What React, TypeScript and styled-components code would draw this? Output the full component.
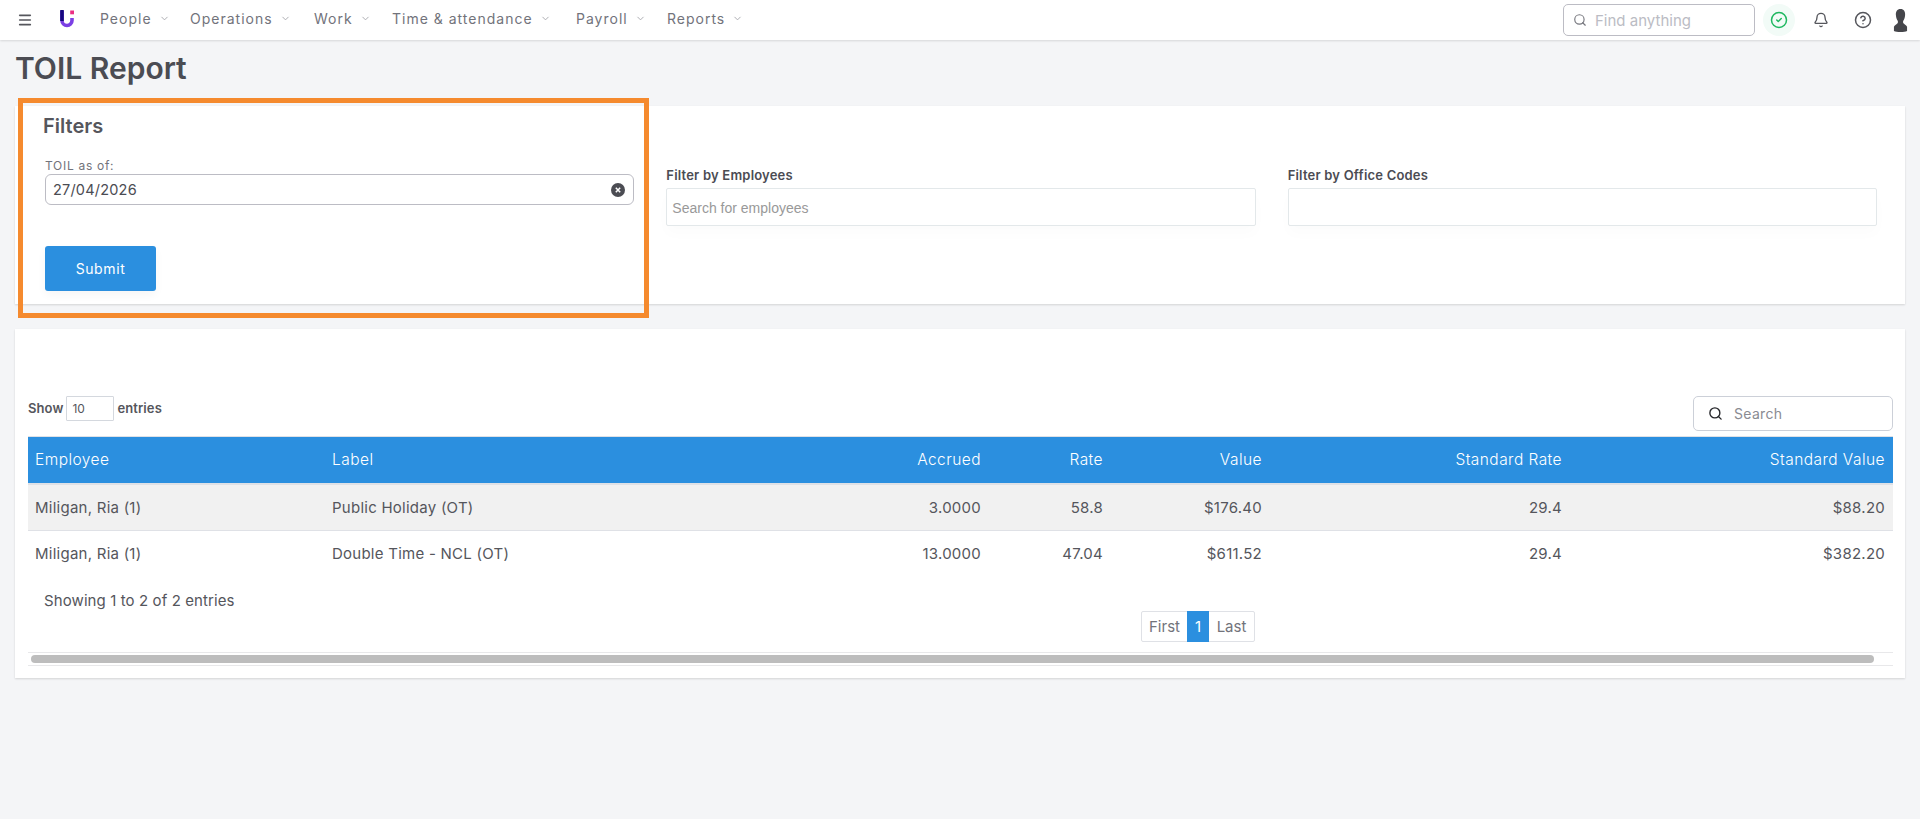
import React from "react";
import styled, { createGlobalStyle } from "styled-components";
import { Bell, ChevronDown, CircleCheck, CircleHelp, Menu, Search } from "lucide-react";

const Global = createGlobalStyle`
  html, body { margin: 0; padding: 0; background: #f4f5f7; }
  body { font-family: "Inter", "Liberation Sans", sans-serif; color: #4b4c53; overflow: hidden; }
  * { box-sizing: border-box; }
`;

const Page = styled.div`
  width: 1920px;
  height: 819px;
  display: flex;
  flex-direction: column;
`;

const TopBar = styled.header`
  height: 40px;
  flex: none;
  background: #fff;
  box-shadow: 0 1px 2px rgba(0, 0, 0, 0.12);
  display: flex;
  align-items: center;
  padding-left: 17px;
`;

const Burger = styled.span`
  width: 16px;
  height: 16px;
  display: flex;
  color: #55565c;
  margin-right: 26px;
`;

const Logo = styled.svg`
  width: 16px;
  height: 19px;
  flex: none;
  margin-right: 25px;
  margin-top: -2px;
`;

const Nav = styled.nav`
  display: flex;
  align-items: center;
  margin-top: -3px;
`;

const NavItem = styled.span<{ $w: number }>`
  width: ${(p) => p.$w}px;
  display: flex;
  align-items: center;
  gap: 7px;
  font-size: 14px;
  letter-spacing: 1px;
  color: #72737b;
  svg { color: #a6a7ad; }
`;

const TopRight = styled.div`
  margin-left: auto;
  display: flex;
  align-items: center;
`;

const FindBox = styled.div`
  width: 192px;
  height: 32px;
  border: 1px solid #bcbcc4;
  border-radius: 5px;
  display: flex;
  align-items: center;
  gap: 8px;
  padding-left: 9px;
  font-size: 15px;
  color: #bbbcc4;
  svg { color: #77787f; }
`;

const StatusDot = styled.span`
  width: 32px;
  height: 32px;
  border-radius: 50%;
  background: #f2fbf7;
  color: #1fb860;
  display: flex;
  align-items: center;
  justify-content: center;
  margin-left: 8px;
`;

const TopIcon = styled.span<{ $ml: number }>`
  display: flex;
  margin-left: ${(p) => p.$ml}px;
  color: #55565c;
`;

const Avatar = styled.svg`
  width: 15px;
  height: 23px;
  margin-left: 21px;
  margin-right: 12px;
`;

const Title = styled.h1`
  margin: 11px 0 0 15px;
  height: 34px;
  font-size: 30px;
  line-height: 34px;
  font-weight: 600;
  color: #4b4c53;
`;

const Card = styled.section`
  background: #fff;
  margin-left: 15px;
  width: 1890px;
  box-shadow: 0 1px 2px rgba(0, 0, 0, 0.14);
  position: relative;
`;

const FilterCard = styled(Card)`
  margin-top: 21px;
  height: 198px;
  padding: 0 28px 0 30px;
  display: grid;
  grid-template-columns: repeat(3, 1fr);
  column-gap: 32px;
`;

const Highlight = styled.div`
  position: absolute;
  left: 3px;
  top: -8px;
  width: 631px;
  height: 220px;
  border: 5px solid #f58a2e;
  pointer-events: none;
`;

const MainFilter = styled.div`
  padding-top: 6px;
`;

const FiltersTitle = styled.h2`
  margin: 0 0 19px -2px;
  font-size: 20px;
  line-height: 28px;
  font-weight: 600;
  color: #55565c;
`;

const DateLabel = styled.label`
  display: block;
  font-size: 12px;
  line-height: 14px;
  letter-spacing: 0.7px;
  color: #72737b;
  margin-bottom: 1px;
`;

const DateField = styled.div`
  height: 31px;
  border: 1px solid #bcbcc4;
  border-radius: 6px;
  display: flex;
  align-items: center;
  justify-content: space-between;
  padding: 0 8px 0 7px;
  margin-bottom: 41px;
`;

const DateInput = styled.input`
  border: 0;
  outline: 0;
  flex: 1;
  padding: 0;
  font: 400 14.5px "Inter", sans-serif;
  letter-spacing: 0.2px;
  color: #4b4c53;
  background: transparent;
`;

const ClearIcon = styled.svg`
  width: 14px;
  height: 14px;
  flex: none;
`;

const SubmitButton = styled.button`
  width: 111px;
  height: 45px;
  border: 0;
  border-radius: 3px;
  background: #2b8fdf;
  color: #fff;
  font: 400 14px "Inter", sans-serif;
  letter-spacing: 0.6px;
  box-shadow: 0 4px 10px rgba(0, 0, 0, 0.04);
`;

const SideFilter = styled.div`
  padding-top: 60px;
`;

const SideLabel = styled.label`
  display: block;
  font-size: 13px;
  line-height: 18px;
  font-weight: 600;
  letter-spacing: 0.2px;
  color: #4b4c53;
  margin-bottom: 4px;
`;

const SideInput = styled.input`
  width: 100%;
  height: 38px;
  display: block;
  border: 1px solid #e3e8ea;
  border-radius: 2px;
  outline: 0;
  padding: 1px 5px 0;
  font: 400 14px "Liberation Sans", sans-serif;
  box-shadow: 0 8px 14px rgba(0, 0, 0, 0.015);
  &::placeholder { color: #999; opacity: 1; }
`;

const TableCard = styled(Card)`
  margin-top: 25px;
  height: 349px;
  padding: 67px 12px 13px 13px;
`;

const Toolbar = styled.div`
  height: 40px;
  display: flex;
  justify-content: space-between;
  align-items: flex-start;
`;

const ShowGroup = styled.div`
  display: flex;
  align-items: center;
  gap: 3px;
  font-size: 13px;
  font-weight: 600;
  height: 23px;
  letter-spacing: 0.1px;
  color: #55565c;
`;

const ShowInput = styled.input`
  width: 48px;
  height: 25px;
  border: 1px solid #d4d8de;
  border-radius: 1px;
  outline: 0;
  padding: 0 5px;
  margin: 2px 0 0;
  font: 400 12px "Inter", sans-serif;
  color: #55565c;
`;

const SearchBox = styled.div`
  width: 200px;
  height: 35px;
  border: 1px solid #ccd0d8;
  border-radius: 5px;
  display: flex;
  align-items: center;
  gap: 11px;
  padding-left: 14px;
  font-size: 14px;
  letter-spacing: 0.3px;
  color: #8a8b92;
  svg { color: #26272b; }
`;

const Table = styled.table`
  width: 1865px;
  border-collapse: collapse;
  table-layout: fixed;
  border-top: 1px solid #dfe1e6;
  font-size: 15px;
`;

const HeadCell = styled.th<{ $right?: boolean }>`
  height: 47px;
  background: #2b8fdf;
  border-bottom: 2px solid #dfe1e6;
  color: #fff;
  font-size: 15.5px;
  font-weight: 300;
  letter-spacing: 0.45px;
  padding: 0 8px 0 7px;
  text-align: ${(p) => (p.$right ? "right" : "left")};
`;

const Row = styled.tr<{ $shade?: boolean }>`
  background: ${(p) => (p.$shade ? "#f1f1f1" : "#fff")};
`;

const Cell = styled.td<{ $right?: boolean; $line?: boolean }>`
  height: ${(p) => (p.$line ? 47 : 45)}px;
  padding: 0 8px 0 7px;
  letter-spacing: 0.25px;
  color: #55565c;
  border-bottom: ${(p) => (p.$line ? "1px solid #dfe1e6" : "0")};
  text-align: ${(p) => (p.$right ? "right" : "left")};
`;

const Info = styled.div`
  margin: 14px 0 0 16px;
  height: 21px;
  line-height: 22px;
  font-size: 15px;
  letter-spacing: 0.1px;
  color: #55565c;
`;

const Pager = styled.div`
  width: 114px;
  height: 31px;
  margin-left: 1113px;
  border: 1px solid #dfe1e6;
  border-radius: 2px;
  display: flex;
  font-size: 15px;
  color: #72737b;
`;

const PageLink = styled.span<{ $active?: boolean; $w: number }>`
  width: ${(p) => p.$w}px;
  display: flex;
  align-items: center;
  justify-content: center;
  background: ${(p) => (p.$active ? "#2b8fdf" : "transparent")};
  color: ${(p) => (p.$active ? "#fff" : "inherit")};
  margin: ${(p) => (p.$active ? "-1px 0" : "0")};
`;

const ScrollTrack = styled.div`
  margin-top: 10px;
  height: 14px;
  border-top: 1px solid #e8e8ea;
  border-bottom: 1px solid #e8e8ea;
  padding: 2px 19px 2px 3px;
`;

const ScrollThumb = styled.div`
  height: 8px;
  border-radius: 4px;
  background: #bdbdbd;
`;

const widths = [297, 475, 189, 122, 159, 300, 323];
const heads = ["Employee", "Label", "Accrued", "Rate", "Value", "Standard Rate", "Standard Value"];
const rows = [
  ["Miligan, Ria (1)", "Public Holiday (OT)", "3.0000", "58.8", "$176.40", "29.4", "$88.20"],
  ["Miligan, Ria (1)", "Double Time - NCL (OT)", "13.0000", "47.04", "$611.52", "29.4", "$382.20"],
];
const nav: [string, number][] = [
  ["People", 90],
  ["Operations", 124],
  ["Work", 78],
  ["Time & attendance", 184],
  ["Payroll", 91],
  ["Reports", 90],
];

export default function App() {
  return (
    <Page>
      <Global />
      <TopBar>
        <Burger><Menu size={16} strokeWidth={2.4} /></Burger>
        <Logo viewBox="0 0 16 19">
          <path d="M3 1v9.5a5 5 0 0 0 10 0V8" fill="none" stroke="#7b3fe4" strokeWidth="3.6" />
          <path d="M1.2 0h3.6v11H1.2z" fill="#16087f" />
          <rect x="11.2" y="0.5" width="3.8" height="3.8" fill="#ec2f83" />
        </Logo>
        <Nav>
          {nav.map(([label, w]) => (
            <NavItem key={label} $w={w}>
              {label}
              <ChevronDown size={11} />
            </NavItem>
          ))}
        </Nav>
        <TopRight>
          <FindBox><Search size={14} />Find anything</FindBox>
          <StatusDot><CircleCheck size={18} strokeWidth={2} /></StatusDot>
          <TopIcon $ml={18}><Bell size={16} /></TopIcon>
          <TopIcon $ml={25}><CircleHelp size={18} strokeWidth={2} /></TopIcon>
          <Avatar viewBox="0 0 16 24" preserveAspectRatio="none">
            <path d="M8 0c3.600 0 5.200 2.800 4.900 6.400-.2 2.600-1 4.400-1.900 5.800-.5.800-.3 2.200.4 3 1.200 1 2.800 1.800 3.600 3.200V23c-1.600.8-3.800 1-7 1s-5.400-.2-7-1v-4.600c.8-1.400 2.400-2.200 3.600-3.200.7-.8.9-2.200.4-3-.9-1.400-1.700-3.200-1.900-5.800C2.800 2.800 4.400 0 8 0z" fill="#45464b" />
          </Avatar>
        </TopRight>
      </TopBar>

      <Title>TOIL Report</Title>

      <FilterCard>
        <MainFilter>
          <FiltersTitle>Filters</FiltersTitle>
          <DateLabel>TOIL as of:</DateLabel>
          <DateField>
            <DateInput readOnly value="27/04/2026" />
            <ClearIcon viewBox="0 0 14 14">
              <circle cx="7" cy="7" r="7" fill="#4b4c53" />
              <path d="M4.800 4.800l4.400 4.400M9.200 4.800l-4.400 4.400" stroke="#fff" strokeWidth="1.500" />
            </ClearIcon>
          </DateField>
          <SubmitButton>Submit</SubmitButton>
        </MainFilter>
        <SideFilter>
          <SideLabel>Filter by Employees</SideLabel>
          <SideInput placeholder="Search for employees" />
        </SideFilter>
        <SideFilter>
          <SideLabel>Filter by Office Codes</SideLabel>
          <SideInput />
        </SideFilter>
        <Highlight />
      </FilterCard>

      <TableCard>
        <Toolbar>
          <ShowGroup>Show <ShowInput readOnly value="10" /> entries</ShowGroup>
          <SearchBox><Search size={15} strokeWidth={2.2} />Search</SearchBox>
        </Toolbar>
        <Table>
          <colgroup>
            {widths.map((w, i) => <col key={i} width={w} />)}
          </colgroup>
          <thead>
            <tr>
              {heads.map((h, i) => <HeadCell key={h} $right={i > 1}>{h}</HeadCell>)}
            </tr>
          </thead>
          <tbody>
            {rows.map((r, ri) => (
              <Row key={ri} $shade={ri === 0}>
                {r.map((c, i) => <Cell key={i} $right={i > 1} $line={ri === 0}>{c}</Cell>)}
              </Row>
            ))}
          </tbody>
        </Table>
        <Info>Showing 1 to 2 of 2 entries</Info>
        <Pager>
          <PageLink $w={45}>First</PageLink>
          <PageLink $w={22} $active>1</PageLink>
          <PageLink $w={45}>Last</PageLink>
        </Pager>
        <ScrollTrack><ScrollThumb /></ScrollTrack>
      </TableCard>
    </Page>
  );
}
